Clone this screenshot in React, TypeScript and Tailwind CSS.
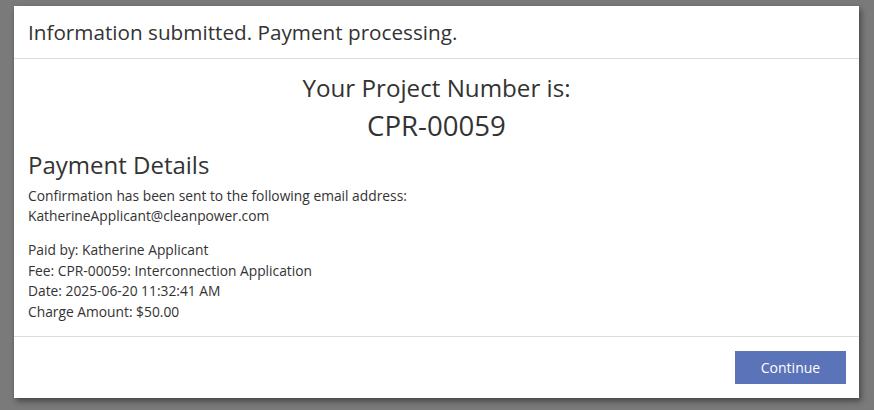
import React from 'react';

const details = [
  'Paid by: Katherine Applicant',
  'Fee: CPR-00059: Interconnection Application',
  'Date: 2025-06-20 11:32:41 AM',
  'Charge Amount: $50.00',
];

const App: React.FC = () => {
  return (
    <div className="w-[874px] h-[410px] bg-[#7a7a7a] pt-[6px] pl-[14px] font-['Open_Sans',sans-serif] text-[#333]">
      <div className="w-[845px] h-[392px] bg-white flex flex-col shadow-[2px_3px_6px_rgba(0,0,0,0.45)]">
        <div className="h-[53px] flex items-center px-[14px] border-b border-[#dcdcdc]">
          <h1 className="text-[20.7px] leading-none">Information submitted. Payment processing.</h1>
        </div>

        <div className="h-[278px] px-[14px] pt-[13px] border-b border-[#dcdcdc]">
          <div className="text-center">
            <p className="text-[24.2px] leading-[32px]">Your Project Number is:</p>
            <p className="text-[27.6px] leading-[42px]">CPR-00059</p>
          </div>
          <h2 className="text-[24px] leading-[32px] mt-[3px]">Payment Details</h2>
          <div className="text-[13.8px] leading-[19.5px] mt-[5px]">
            <p>Confirmation has been sent to the following email address:</p>
            <p>KatherineApplicant@cleanpower.com</p>
          </div>
          <div className="text-[13.8px] leading-[20.5px] mt-[15px]">
            {details.map((line) => (
              <p key={line}>{line}</p>
            ))}
          </div>
        </div>

        <div className="flex-1 flex justify-end items-start pt-[14px] pr-[13px]">
          <button className="w-[111px] h-[33px] bg-[#5b73b8] text-white text-[14px]">Continue</button>
        </div>
      </div>
    </div>
  );
};

export default App;
